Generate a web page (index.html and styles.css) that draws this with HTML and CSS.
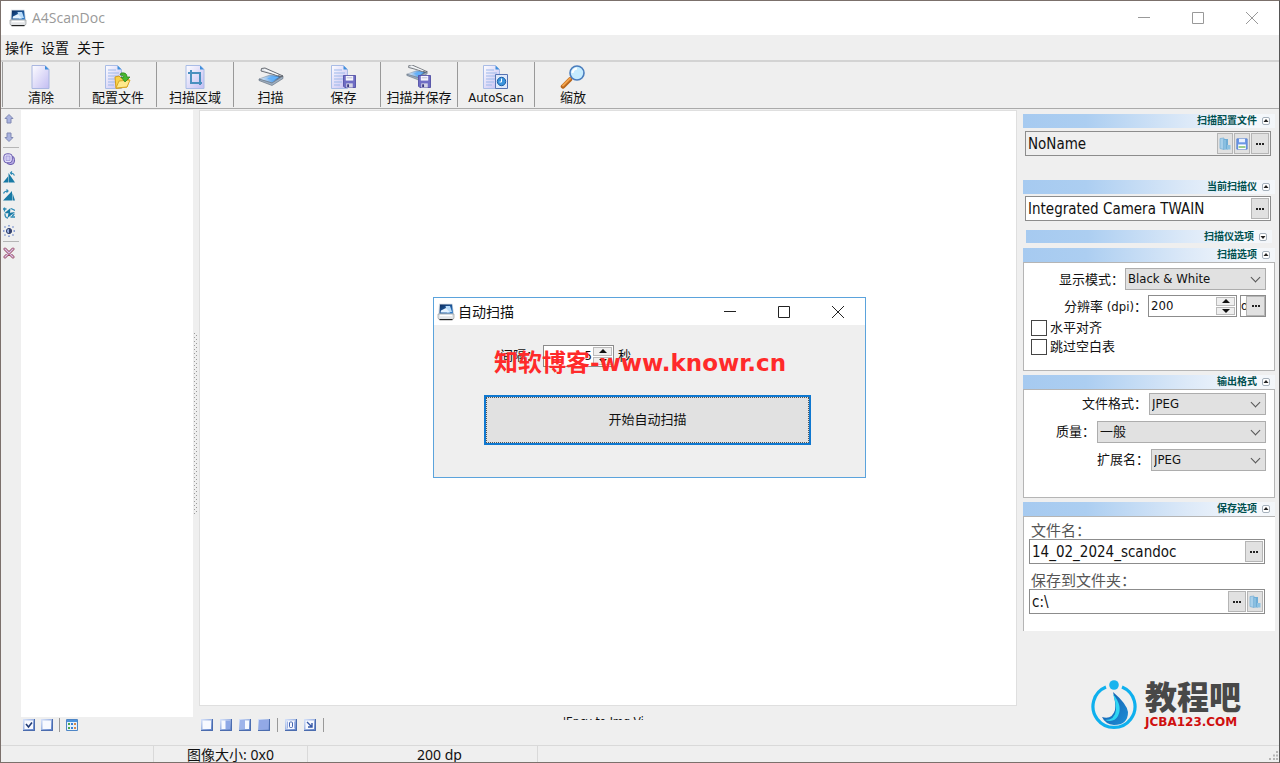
FILE: index.html
```html
<!DOCTYPE html>
<html lang="zh-CN">
<head>
<meta charset="utf-8">
<title>A4ScanDoc</title>
<link rel="stylesheet" href="styles.css">
</head>
<body>
<svg class="defs" aria-hidden="true">
  <defs>
    <linearGradient id="gPage" x1="0" y1="0" x2="1" y2="1"><stop offset="0" stop-color="#fdfdff"/><stop offset="1" stop-color="#c3bdf2"/></linearGradient>
    <linearGradient id="gBlue" x1="0" y1="0" x2="1" y2="1"><stop offset="0" stop-color="#d9e4fb"/><stop offset="1" stop-color="#5579c4"/></linearGradient>
    <linearGradient id="gScreen" x1="0" y1="0" x2="1" y2="1"><stop offset="0" stop-color="#0a2a5c"/><stop offset="1" stop-color="#2d7fd0"/></linearGradient>
    <linearGradient id="gBed" x1="0" y1="0" x2="1" y2="0"><stop offset="0" stop-color="#e8eef5"/><stop offset=".6" stop-color="#5fa4ea"/><stop offset="1" stop-color="#39455a"/></linearGradient>
    <linearGradient id="gDrop" x1="0" y1="0" x2="1" y2="1"><stop offset="0" stop-color="#1557a8"/><stop offset="1" stop-color="#1c8fd8"/></linearGradient>
    <symbol id="app" viewBox="0 0 18 18">
      <path d="M2 .8h13.500l1.500 10.200H1.500z" fill="#c9d3dd"/>
      <path d="M3 1.500h12l1 9H2.500z" fill="url(#gScreen)"/>
      <path d="M8.500 3h4.500l2 6-5 .5z" fill="#b9dcfa"/><path d="M4 7.500l5-2.500 4 4.500H3.500z" fill="#e6f3ff"/>
      <path d="M1 11h16v3.500q0 2-2 2H3q-2 0-2-2z" fill="#e3e5e7" stroke="#8c9196" stroke-width=".6"/>
      <path d="M3 12.500h12" stroke="#fff" stroke-width="1.500"/><path d="M2.500 16.600h13" stroke="#222" stroke-width="1.200"/>
    </symbol>
    <symbol id="page" viewBox="0 0 24 24">
      <path d="M3 .5h13l4 4v19H3z" fill="url(#gPage)" stroke="#a9b6e0"/><path d="M16 .5v4h4z" fill="#3f8fdc"/>
    </symbol>
    <symbol id="doc" viewBox="0 0 24 24">
      <path d="M.5.5h12l4 4v19H.5z" fill="url(#gPage)" stroke="#a9bce6"/><path d="M12.500.5v4h4z" fill="#3f8fdc"/>
      <path d="M3 5h8M3 8h11M3 11h11M3 14h11M3 17h8M3 20h6" stroke="#9db9ea"/>
    </symbol>
    <symbol id="disk" viewBox="0 0 14 14">
      <path d="M.5.5h13v13H2l-1.500-1.500z" fill="#6f6dc4" stroke="#5250a4"/><path d="M3 1h8v5H3z" fill="#f5f5fc"/><path d="M4 3h6" stroke="#b7b7d0"/>
      <path d="M3.500 9h7v4.500h-7z" fill="#d4d4e6"/><path d="M4.500 10h2v3h-2z" fill="#3a3880"/>
    </symbol>
    <symbol id="scanner" viewBox="0 0 26 20">
      <path d="M1 12l11-4 13 1-11 7z" fill="url(#gBed)" stroke="#8794a3" stroke-width=".6"/>
      <path d="M1 12v1.500l13 5 11-7V9l-11 7z" fill="#9fb0c2" stroke="#5b6675" stroke-width=".6"/>
      <path d="M3.500 1.500L7 1l18 8-2 .5L3 4z" fill="#dfe3e8" stroke="#5a5f66" stroke-width=".9"/><path d="M6 2.500l14 5.500" stroke="#fff"/>
      <path d="M9 11.500l6-2 6 .5-6 3.500z" fill="#62b1fa"/>
    </symbol>
    <symbol id="i-config" viewBox="0 0 26 24">
      <use href="#doc" width="24" height="24"/>
      <path d="M10 12l4-1 2 2h6l2 2-2 7-11 1.500z" fill="#f8d24a" stroke="#d39c1c"/><path d="M11 23l3-7 11-1-3 7z" fill="#ffe98c" stroke="#d9a727"/>
      <path d="M16 8q6-1 6 4h3l-5 5-4-5h3q0-2-4-2z" fill="#46b82e" stroke="#277a16" stroke-width=".7"/>
    </symbol>
    <symbol id="i-area" viewBox="0 0 20 24">
      <path d="M1 .5h14l4 4v19H1z" fill="url(#gPage)" stroke="#a9bce6"/><path d="M15 .5v4h4z" fill="#3f8fdc"/>
      <path d="M6 5v13h11M3 8h12v12" fill="none" stroke="#4a90bf" stroke-width="2"/>
    </symbol>
    <symbol id="i-save" viewBox="0 0 26 24"><use href="#doc" width="24" height="24"/><use href="#disk" x="12" y="10" width="13" height="13"/></symbol>
    <symbol id="i-scansave" viewBox="0 0 26 24"><use href="#scanner" width="22" height="17" x="0" y="-1"/><use href="#disk" x="12" y="10" width="13" height="13"/></symbol>
    <symbol id="i-auto" viewBox="0 0 26 24"><use href="#doc" width="24" height="24"/>
      <path d="M12.500 9.500h12v14h-12z" fill="#dfe9fb" stroke="#5672b2"/><circle cx="18.500" cy="16.500" r="4.200" fill="#3b94dc" stroke="#1c5fa6"/><path d="M18.500 13.500v3.500h-2" stroke="#fff" fill="none"/></symbol>
    <symbol id="i-zoom" viewBox="0 0 26 24">
      <path d="M3 21.500l7-7" stroke="#b8661c" stroke-width="4.500" stroke-linecap="round"/><path d="M3 20.500l7-7" stroke="#f2a24b" stroke-width="2" stroke-linecap="round"/>
      <circle cx="17" cy="8" r="7" fill="#c5ecff" stroke="#4a7dbd" stroke-width="1.600"/><path d="M12.500 8q.5-4 4.500-4.500" stroke="#fff" stroke-width="2" fill="none"/>
    </symbol>
    <symbol id="s-up" viewBox="0 0 12 12"><path d="M6 1.500l4 4H8V10H4V5.500H2z" fill="#a9b3e0" stroke="#8189b3"/></symbol>
    <symbol id="s-down" viewBox="0 0 12 12"><path d="M6 10.500l-4-4h2V2h4v4.500h2z" fill="#a9b3e0" stroke="#8189b3"/></symbol>
    <symbol id="s-copy" viewBox="0 0 12 12"><rect x="3.500" y="3" width="8" height="8.500" rx="3.500" fill="#b9aee6" stroke="#6a5cad"/><rect x=".8" y=".8" width="8.500" height="9" rx="3" fill="#e4e0fb" stroke="#6a5cad"/><path d="M3 3h4v4.500H3z" fill="#cfcaf2" stroke="#8d82cc" stroke-width=".6"/></symbol>
    <symbol id="s-rotl" viewBox="0 0 12 12"><path d="M0 11.500l5-6v6zM5.500 11.500V2L12 11.500z" fill="#187aa5"/><path d="M11.500 4.500Q10.500 1.800 7.500 2M9 .5L7.500 2 9 3.500" stroke="#2d8ab5" fill="none" stroke-width="1.200"/></symbol>
    <symbol id="s-rotr" viewBox="0 0 12 12"><path d="M12 11.500L9.500 4v7.500zM9 11.500V2L0 11.500z" fill="#187aa5"/><path d="M.5 4.500Q1.500 1.800 5 2M3.500.5L5 2 3.500 3.500" stroke="#2d8ab5" fill="none" stroke-width="1.200"/></symbol>
    <symbol id="s-rot" viewBox="0 0 12 12"><path d="M1 6.500L7.500 1 7 6zM4.500 11l1-5L12 5z" fill="#187aa5"/><path d="M0 2h3.500M1.500.5v4M9 8.500q2 0 2-2M7.500 10H12M2 7q0 4 3 4M8 1.500l4 2" stroke="#2d8ab5" fill="none" stroke-width="1.300"/></symbol>
    <symbol id="s-bright" viewBox="0 0 12 12"><circle cx="6" cy="6" r="2.600" fill="#9db4e8" stroke="#36436e"/><path d="M6 3.400a2.600 2.600 0 0 1 0 5.200z" fill="#36436e"/><path d="M6 0v1.500M6 10.500V12M0 6h1.500M10.500 6H12M1.500 1.500l1 1M9.500 9.500l1 1M1.500 10.500l1-1M9.500 2.500l1-1" stroke="#6d88cb" stroke-width="1.400"/></symbol>
    <symbol id="s-del" viewBox="0 0 12 12"><path d="M2 2l8 8M10 2l-8 8" stroke="#9a4a62" stroke-width="3" stroke-linecap="round"/><path d="M2 2l8 8M10 2l-8 8" stroke="#d9c0e6" stroke-width="1.400" stroke-linecap="round"/></symbol>
    <symbol id="b-box" viewBox="0 0 12 12"><path d="M0 0h12v12H0z" fill="url(#gBlue)"/><path d="M0 11.500h11.500V0" fill="none" stroke="#4b6cae"/><path d="M1.500 1.500h8.500v8.500H1.500z" fill="#f7f9ff"/></symbol>
    <symbol id="b-check" viewBox="0 0 12 12"><use href="#b-box"/><path d="M3 5l2.500 3L9 3.500" fill="none" stroke="#223c77" stroke-width="1.600"/></symbol>
    <symbol id="b-right" viewBox="0 0 12 12"><use href="#b-box"/><path d="M5.500 1.500H10V10H5.500z" fill="#8ea8e6"/></symbol>
    <symbol id="b-left" viewBox="0 0 12 12"><use href="#b-box"/><path d="M1 1h5v9H1z" fill="#9fb4ea"/></symbol>
    <symbol id="b-full" viewBox="0 0 12 12"><use href="#b-box"/><path d="M1 1h9.500v9.500H1z" fill="#92a9e6"/></symbol>
    <symbol id="b-zero" viewBox="0 0 12 12"><use href="#b-box"/><rect x="4.500" y="3" width="3" height="5.500" rx="1" fill="none" stroke="#4364ae"/><path d="M2.500 2.500v7M9.500 2.500v7" stroke="#9db2e6"/></symbol>
    <symbol id="b-swap" viewBox="0 0 12 12"><use href="#b-box"/><path d="M3 3l5 5M8 4v4H4" fill="none" stroke="#3457a6" stroke-width="1.400"/></symbol>
    <symbol id="b-grid" viewBox="0 0 12 12"><path d="M.5.5h11v11H.5z" fill="#e7f1fb" stroke="#4e86c6"/><path d="M1 1h10v2H1z" fill="#4d93dd"/><path d="M2 5h2M2 9h2" stroke="#49a84d" stroke-width="2"/><path d="M5 5h2M5 9h2" stroke="#3a7fd6" stroke-width="2"/><path d="M8 5h2M8 9h2" stroke="#d8894a" stroke-width="2"/></symbol>
    <symbol id="folder" viewBox="0 0 12 14"><path d="M1 1.500L5 1v11.500l-4-1z" fill="#a9d0ea" stroke="#7fb2d6" stroke-width=".8"/><path d="M4.500 2H9v10.500H4.500z" fill="#6fadd6"/><path d="M6 3v9" stroke="#a5d0ea"/><path d="M8 8h3.500v4.500H8z" fill="#8ec2e2"/></symbol>
    <symbol id="floppy" viewBox="0 0 14 14"><path d="M1 1h12v12H1z" fill="#6d98e6" stroke="#5580d0"/><path d="M3.500 1h7v4h-7z" fill="#e9f1ff"/><path d="M2.500 7.500h9V13h-9z" fill="#fff"/><path d="M3 9.500h8v2H3z" fill="#8cc67b"/></symbol>
    <symbol id="min" viewBox="0 0 12 12"><path d="M0 5.500h12" stroke="currentColor"/></symbol>
    <symbol id="max" viewBox="0 0 12 12"><path d="M.5.5h11v11H.5z" fill="none" stroke="currentColor"/></symbol>
    <symbol id="close" viewBox="0 0 12 12"><path d="M0 0l12 12M12 0L0 12" stroke="currentColor"/></symbol>
    <symbol id="tog-up" viewBox="0 0 8 8"><rect x=".5" y=".5" width="7" height="7" rx="1.500" fill="#fff" stroke="#a5b0bb"/><path d="M1.500 5L4 2l2.500 3z" fill="#222"/></symbol>
    <symbol id="tog-down" viewBox="0 0 8 8"><rect x=".5" y=".5" width="7" height="7" rx="1.500" fill="#fff" stroke="#a5b0bb"/><path d="M1.500 3L4 6l2.500-3z" fill="#222"/></symbol>
  </defs>
</svg>

<div class="window">
  <header class="titlebar">
    <svg class="ic18"><use href="#app"/></svg>
    <h1 class="title">A4ScanDoc</h1>
    <div class="winbtns">
      <button aria-label="最小化"><svg><use href="#min"/></svg></button>
      <button aria-label="最大化"><svg><use href="#max"/></svg></button>
      <button aria-label="关闭"><svg><use href="#close"/></svg></button>
    </div>
  </header>
  <nav class="menubar"><button>操作</button><button>设置</button><button>关于</button></nav>
  <div class="toolbar">
    <div class="tgroup"><button class="tool"><svg><use href="#page"/></svg>清除</button></div>
    <div class="tgroup"><button class="tool"><svg><use href="#i-config"/></svg>配置文件</button></div>
    <div class="tgroup"><button class="tool"><svg><use href="#i-area"/></svg>扫描区域</button></div>
    <div class="tgroup pair"><button class="tool"><svg><use href="#scanner"/></svg>扫描</button><button class="tool"><svg><use href="#i-save"/></svg>保存</button></div>
    <div class="tgroup"><button class="tool"><svg><use href="#i-scansave"/></svg>扫描并保存</button></div>
    <div class="tgroup"><button class="tool"><svg><use href="#i-auto"/></svg>AutoScan</button></div>
    <div class="tgroup"><button class="tool"><svg><use href="#i-zoom"/></svg>缩放</button></div>
  </div>

  <main class="main">
    <div class="sidebar">
      <button aria-label="上移"><svg><use href="#s-up"/></svg></button>
      <button aria-label="下移"><svg><use href="#s-down"/></svg></button>
      <hr>
      <button aria-label="复制"><svg><use href="#s-copy"/></svg></button>
      <button aria-label="向左旋转"><svg><use href="#s-rotl"/></svg></button>
      <button aria-label="向右旋转"><svg><use href="#s-rotr"/></svg></button>
      <button aria-label="旋转"><svg><use href="#s-rot"/></svg></button>
      <button aria-label="亮度"><svg><use href="#s-bright"/></svg></button>
      <hr>
      <button aria-label="删除"><svg><use href="#s-del"/></svg></button>
    </div>
    <section class="thumbs">
      <div class="thumblist"></div>
      <div class="minibar">
        <button aria-label="全选"><svg><use href="#b-check"/></svg></button>
        <button aria-label="取消选择"><svg><use href="#b-box"/></svg></button>
        <i class="sep"></i>
        <button aria-label="缩略图"><svg><use href="#b-grid"/></svg></button>
      </div>
    </section>
    <div class="splitter"><svg width="5" height="182" aria-hidden="true"><path d="M1.500 0v182" stroke="#999" stroke-dasharray="1 3"/><path d="M3.500 2v180" stroke="#999" stroke-dasharray="1 3"/></svg></div>
    <section class="viewer">
      <div class="canvas"></div>
      <div class="viewfoot">
        <div class="minibar">
          <button aria-label="单页"><svg><use href="#b-box"/></svg></button>
          <button aria-label="右半页"><svg><use href="#b-right"/></svg></button>
          <button aria-label="左半页"><svg><use href="#b-left"/></svg></button>
          <button aria-label="整页"><svg><use href="#b-full"/></svg></button>
          <i class="sep"></i>
          <button aria-label="原始大小"><svg><use href="#b-zero"/></svg></button>
          <button aria-label="适合窗口"><svg><use href="#b-swap"/></svg></button>
          <i class="sep"></i>
        </div>
        <div class="hint">'Ency to Img Vi</div>
      </div>
    </section>

    <aside class="panel">
      <section class="group">
        <h2 class="ghead">扫描配置文件<svg><use href="#tog-up"/></svg></h2>
        <div class="field gray"><input aria-label="扫描配置文件" value="NoName"><button class="fbtn" aria-label="打开"><svg><use href="#folder"/></svg></button><button class="fbtn" aria-label="保存配置"><svg><use href="#floppy"/></svg></button><button class="fbtn dots" aria-label="更多"><i></i></button></div>
      </section>
      <section class="group scanner">
        <h2 class="ghead">当前扫描仪<svg><use href="#tog-up"/></svg></h2>
        <div class="field"><input aria-label="当前扫描仪" value="Integrated Camera TWAIN"><button class="fbtn dots" aria-label="更多"><i></i></button></div>
      </section>
      <section class="group folded">
        <h2 class="ghead">扫描仪选项<svg><use href="#tog-down"/></svg></h2>
      </section>
      <section class="group">
        <h2 class="ghead">扫描选项<svg><use href="#tog-up"/></svg></h2>
        <div class="gbody scanopts">
          <div class="row"><label for="mode">显示模式：</label><span class="combo w-mode"><select id="mode"><option>Black &amp; White</option></select></span></div>
          <div class="row"><label for="dpi">分辨率 (dpi)：</label><span class="spin w-dpi"><input id="dpi" value="200"><span class="arrows"><button aria-label="增加"></button><button aria-label="减少"></button></span></span><span class="unit"><b>d</b><button class="fbtn dots" aria-label="更多"><i></i></button></span></div>
          <label class="check"><input type="checkbox">水平对齐</label>
          <label class="check"><input type="checkbox">跳过空白表</label>
        </div>
      </section>
      <section class="group">
        <h2 class="ghead">输出格式<svg><use href="#tog-up"/></svg></h2>
        <div class="gbody output">
          <div class="row"><label for="fmt">文件格式：</label><span class="combo w-fmt"><select id="fmt"><option>JPEG</option></select></span></div>
          <div class="row"><label for="quality">质量：</label><span class="combo w-quality"><select id="quality"><option>一般</option></select></span></div>
          <div class="row"><label for="ext">扩展名：</label><span class="combo w-ext"><select id="ext"><option>JPEG</option></select></span></div>
        </div>
      </section>
      <section class="group">
        <h2 class="ghead">保存选项<svg><use href="#tog-up"/></svg></h2>
        <div class="gbody saving">
          <label for="fname">文件名：</label>
          <div class="field"><input id="fname" value="14_02_2024_scandoc"><button class="fbtn dots" aria-label="更多"><i></i></button></div>
          <label for="fdir">保存到文件夹：</label>
          <div class="field"><input id="fdir" value="c:\"><button class="fbtn dots" aria-label="浏览"><i></i></button><button class="fbtn" aria-label="打开文件夹"><svg><use href="#folder"/></svg></button></div>
        </div>
      </section>
      <div class="brand">
        <svg class="brandmark" viewBox="0 0 46 50">
          <path d="M31 7A21 21 0 1 1 15 7" fill="none" stroke="#0fb0ee" stroke-width="3.200"/><circle cx="23" cy="5" r="4.800" fill="#17b4ee"/>
          <path d="M22 12Q36 24 37 32Q37 45 23 45Q14 44 11 37Q21 40 24 30Q25 23 22 12z" fill="url(#gDrop)"/>
          <path d="M22 14Q32 26 27 36Q23 43 14 40Q24 40 25 30Q25 22 22 14z" fill="#2fd5f3"/>
        </svg>
        <div class="brandtext"><strong>教程吧</strong><span>JCBA123.COM</span></div>
      </div>
    </aside>
  </main>

  <footer class="status">
    <span></span><span>图像大小: 0x0</span><span><em>200 dpi</em></span><span></span>
    <svg class="grip" viewBox="0 0 10 10"><path d="M7 0h2v2H7zM4 3.500h2v2H4zM7 3.500h2v2H7zM0 7h2v2H0zM4 7h2v2H4zM7 7h2v2H7z" fill="#b5b5b5"/></svg>
  </footer>
</div>

<div class="dialog" role="dialog" aria-labelledby="dlgtitle">
  <header class="dlghead">
    <svg class="ic18"><use href="#app"/></svg><h2 id="dlgtitle">自动扫描</h2>
    <div class="winbtns">
      <button aria-label="最小化"><svg><use href="#min"/></svg></button>
      <button aria-label="最大化"><svg><use href="#max"/></svg></button>
      <button aria-label="关闭"><svg><use href="#close"/></svg></button>
    </div>
  </header>
  <div class="dlgbody">
    <div class="interval"><label for="sec">间隔：</label><span class="spin"><input id="sec" value="5"><span class="arrows"><button aria-label="增加"></button><button aria-label="减少"></button></span></span><span>秒</span></div>
    <button class="start">开始自动扫描</button>
  </div>
  <div class="watermark">知软博客<span>-www.knowr.cn</span></div>
</div>
</body>
</html>
```
FILE: styles.css
```css
* { box-sizing: border-box; }
body {
  margin: 0;
  font: 13px/16px "DejaVu Sans Condensed", "Noto Sans CJK SC", sans-serif;
  color: #111;
  background: #efefef;
}
button, input, select { font: inherit; color: inherit; }
button { border: 0; padding: 0; background: none; }
h1, h2 { margin: 0; font-weight: 400; }
.defs { position: absolute; width: 0; height: 0; }

.window {
  display: flex;
  flex-direction: column;
  height: 100vh;
  border: 1px solid #7b706b;
  border-right-color: #555;
}
.titlebar { display: flex; align-items: center; height: 34px; padding-left: 8px; background: #fff; }
.ic18 { width: 18px; height: 18px; }
.title { margin-left: 5px; font: 14px/20px "Open Sans", sans-serif; color: #999; }
.winbtns { display: flex; margin-left: auto; color: #999; }
.winbtns button { width: 54px; height: 28px; display: grid; place-items: center; }
.winbtns svg { width: 12px; height: 12px; }

.menubar { display: flex; gap: 8px; height: 27px; padding: 0 4px; font-size: 14px; align-items: center; border-bottom: 2px solid #d3d3d3; }
.toolbar { display: flex; height: 47px; padding-left: 1px; border-bottom: 1px solid #aaa; }
.tgroup { display: flex; width: 77px; margin-bottom: 1px; border-left: 1px solid #999; }
.pair { width: 147px; }
.tool { flex: 1; display: flex; flex-direction: column; align-items: center; padding-top: 3px; white-space: nowrap; line-height: 17px; }
.tool svg { width: 26px; height: 24px; }

.main { flex: 1; display: flex; min-height: 0; padding-top: 1px; }
.sidebar { width: 20px; display: flex; flex-direction: column; padding: 0 2px; }
.sidebar button { height: 18px; display: grid; place-items: center start; }
.sidebar svg { width: 12px; height: 12px; }
.sidebar hr { width: 100%; margin: 1px 0 2px; border: 0; border-top: 1px solid #b5b5b5; }
.thumbs { width: 172px; display: flex; flex-direction: column; }
.thumblist { flex: 1; background: #fff; }
.minibar { display: flex; align-items: center; gap: 7px; height: 16px; padding-left: 2px; }
.minibar svg { display: block; width: 12px; height: 12px; }
.sep { width: 1px; height: 14px; background: #999; }
.thumbs .minibar { gap: 6px; margin-bottom: 12px; }
.splitter { width: 6px; display: grid; align-items: center; padding-bottom: 8px; }
.viewer { flex: 1; display: flex; flex-direction: column; min-width: 0; }
.canvas { flex: 1; background: #fff; border: 1px solid #dfdfdf; }
.viewfoot { display: flex; height: 39px; padding-top: 10px; }
.viewfoot .minibar { flex: 0 0 364px; margin-top: 1px; }
.hint { height: 4px; overflow: hidden; line-height: 12px; font-size: 12px; }

.panel { width: 262px; display: flex; flex-direction: column; padding: 4px 4px 0 6px; }
.ghead {
  display: flex; align-items: center; justify-content: flex-end; gap: 5px; height: 14px; padding-right: 5px;
  font-size: 10px; line-height: 14px; font-weight: 700; color: #00504f;
  background: linear-gradient(90deg, #a6caf0 0%, #accef1 25%, #dce9f8 65%, #f5f8fc 90%, #f3f6f9 100%);
}
.ghead svg { width: 8px; height: 8px; }
.field { display: flex; align-items: stretch; height: 25px; margin: 3px 4px 0 2px; padding: 1px; gap: 1px; background: #fff; border: 1px solid #8c8c8c; }
.field input { flex: 1; min-width: 0; border: 0; padding: 0 1px; font-size: 15px; line-height: 20px; background: none; outline: 0; }
.gray { background: #efefef; }
.fbtn { display: grid; place-items: center; width: 16px; background: #e1e1e1; border: 1px solid #b5b5b5; }
.fbtn svg { width: 12px; height: 14px; }
.dots { width: 18px; }
.dots i { width: 8px; height: 2px; background: repeating-linear-gradient(90deg, #222 0 2px, transparent 2px 3px); }
.scanner { margin-top: 24px; }
.scanner .field { margin-top: 2px; }
.folded { margin: 9px 3px 5px; }
.folded .ghead { height: 13px; }
.gbody { background: #fff; border: 1px solid #b5b5b5; padding: 5px 8px; }
.row { display: flex; justify-content: flex-end; align-items: center; gap: 1px; }
.row label { white-space: nowrap; padding-top: 2px; }
.scanopts { height: 109px; margin-bottom: 4px; }
.scanopts .row { height: 22px; margin-bottom: 5px; }
.scanopts .row + .row { margin-bottom: 1px; }
.combo { position: relative; height: 22px; }
.combo::after {
  content: ""; position: absolute; right: 7px; top: 6px; width: 6px; height: 6px;
  border: solid #555; border-width: 0 1px 1px 0; transform: rotate(45deg);
}
.combo select { appearance: none; width: 100%; height: 22px; padding: 0 2px; background: #e1e1e1; border: 1px solid #adadad; border-radius: 0; }
.w-mode { width: 141px; }
.w-fmt { width: 117px; }
.w-ext { width: 115px; }
.w-quality { width: 169px; }
.spin { display: flex; height: 22px; padding: 1px; border: 1px solid #8c8c8c; background: #fff; }
.spin input { flex: 1; min-width: 0; border: 0; padding: 0 1px; background: none; outline: 0; }
.w-dpi { width: 89px; margin-right: 2px; }
.arrows { display: flex; flex-direction: column; width: 19px; gap: 1px; }
.arrows button { flex: 1; display: grid; place-items: center; background: #efefef; border: 1px solid #bbb; }
.arrows button::before { content: ""; border: 4px solid transparent; border-top: 0; border-bottom-color: #111; }
.arrows button + button::before { border: 4px solid transparent; border-bottom: 0; border-top-color: #111; }
.unit { display: flex; width: 26px; height: 22px; border: 1px solid #8c8c8c; }
.unit b { width: 5px; overflow: hidden; font-weight: 400; line-height: 20px; }
.unit .dots { flex: 1; }
.check { display: flex; align-items: center; gap: 3px; height: 19px; }
.check input { appearance: none; width: 16px; height: 16px; margin: 0 0 0 -1px; border: 1px solid #444; background: #fff; }
.output { height: 109px; margin-bottom: 4px; padding-top: 2px; }
.output .row { height: 23px; margin-bottom: 5px; }
.output .row label { padding: 0 1px 0 0; }
.saving { height: 115px; padding: 6px 10px 0 5px; border-width: 1px 0 0 1px; }
.saving label { display: block; padding-left: 2px; font-size: 15px; line-height: 16px; color: #555; }
.saving .field { margin: 0 0 9px; }
.brand { display: flex; gap: 8px; margin: auto 34px 14px auto; }
.brandmark { width: 46px; height: 52px; }
.brandtext { display: flex; flex-direction: column; }
.brandtext strong { font: 900 32px/32px "Noto Sans CJK SC", sans-serif; color: #484848; }
.brandtext span { margin-top: 4px; font: 700 12px/14px "DejaVu Sans", sans-serif; color: #cf1010; }

.status { display: flex; height: 17px; border-top: 1px solid #d9d9d9; font: 14px/17px "Noto Sans", "Noto Sans CJK SC", sans-serif; overflow: hidden; }
.status span { width: 153px; text-align: center; border-right: 1px solid #d9d9d9; white-space: nowrap; }
.status span:nth-child(2) { width: 154px; }
.status span:nth-child(3) { width: 230px; padding-left: 34px; }
.status em { display: inline-block; width: 45px; overflow: hidden; font-style: normal; text-align: left; }
.status span:nth-child(4) { border: 0; }
.grip { width: 10px; height: 10px; margin: 5px 0 0 auto; }

.dialog { position: absolute; left: 433px; top: 297px; width: 433px; background: #efefef; border: 1px solid #5ba3dc; }
.dlghead { display: flex; align-items: center; height: 27px; padding-left: 3px; background: #fff; }
.dlghead h2 { margin-left: 3px; font-size: 14px; }
.dlghead .winbtns { color: #222; }
.dlgbody { padding: 20px 54px 32px 50px; }
.interval { display: flex; align-items: center; gap: 4px; padding-left: 16px; }
.interval .spin { width: 71px; }
.interval .spin input { text-align: right; }
.start { display: block; width: 100%; height: 50px; margin-top: 28px; background: #e1e1e1; border: 2px solid #0f78d0; outline: 1px dotted #555; outline-offset: -3px; }
.watermark { position: absolute; left: 60px; top: 47px; font: 700 24px/32px "Noto Sans CJK SC", sans-serif; color: #ff2a2a; white-space: nowrap; }
.watermark span { font: 700 23px/32px "DejaVu Sans", sans-serif; }
```
